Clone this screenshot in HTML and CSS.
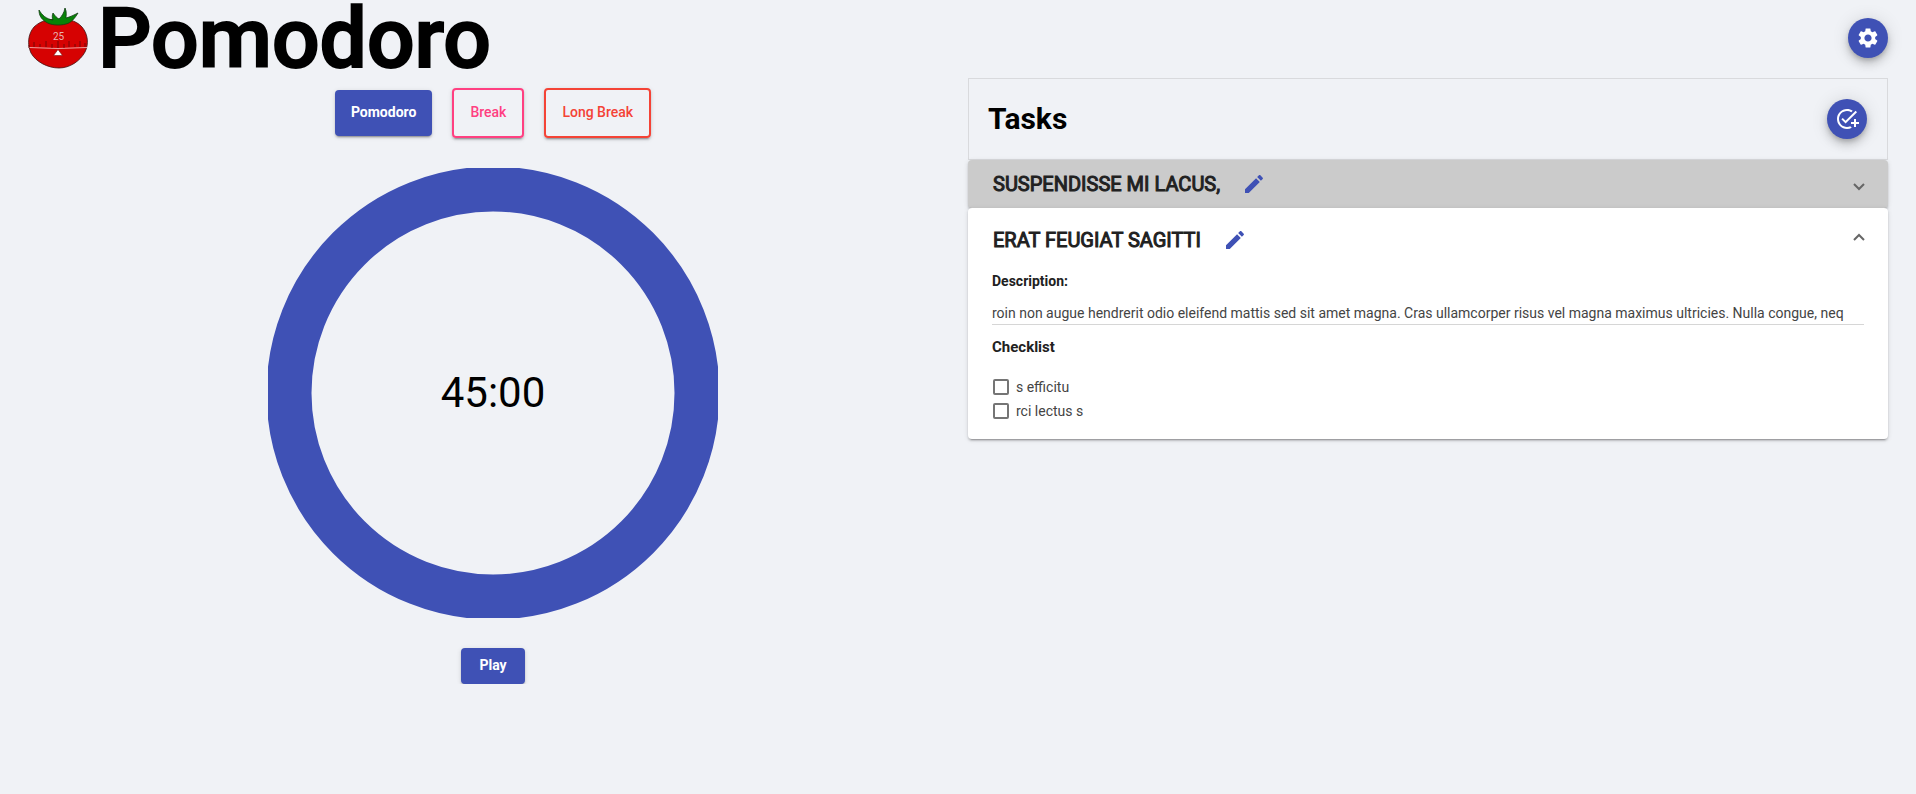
FILE: index.html
```
<!DOCTYPE html>
<html lang="en">
<head>
<meta charset="utf-8">
<title>Pomodoro</title>
<link rel="stylesheet" href="styles.css">
</head>
<body>
<header class="topbar">
  <svg class="logo" viewBox="0 0 60 60" aria-hidden="true">
    <path d="M30 12C37 10 48 12 54 19C60 26 61 36 57 44C52 53 42 60 31 60C20 60 8 54 3 45C-1 36 0 26 6 19C12 13 22 10 30 12Z" fill="#d60202" stroke="#431010" stroke-width=".8"/>
    <path d="M11 2C14 7 18 11 25 12C24 10 24 7 25 5C27 8 29 10 31 11C34 8 36 5 37 0C39 4 38 8 38 10C42 9 46 7 50 5C47 10 43 15 38 16C31 18 22 17 18 14C13 11 11 7 11 2Z" fill="#078307" stroke="#123c12" stroke-width=".8"/>
    <path d="M1 39.500Q30 41.500 59 39.500" fill="none" stroke="#f0a0a0"/>
    <path d="M1 37v3M6 34v5M12 36v3M18 33v6M24 36v4M30 33v7M36 36v4M41 33v6M47 36v3M52 33v6M57 35v4" stroke="#6b0808" stroke-width=".9"/>
    <path d="M30 41.500L34.500 47.500H25.500Z" fill="#fff" stroke="#7b1010" stroke-width=".6"/>
    <text class="logo-text" x="30.500" y="32" text-anchor="middle">25</text>
  </svg>
  <h1 class="title">Pomodoro</h1>
  <button class="fab" type="button" aria-label="Settings">
    <svg class="icon" viewBox="0 0 24 24"><path d="M19.140 12.940c.04-.3.06-.61.06-.94 0-.32-.02-.64-.07-.94l2.030-1.580c.18-.14.23-.41.12-.61l-1.920-3.320c-.12-.22-.37-.29-.59-.22l-2.390.96c-.5-.38-1.030-.7-1.620-.94l-.36-2.540c-.04-.24-.24-.41-.48-.41h-3.840c-.24 0-.43.17-.47.41l-.36 2.540c-.59.24-1.130.57-1.620.94l-2.390-.96c-.22-.08-.47 0-.59.22L2.740 8.870c-.12.21-.08.47.12.61l2.030 1.580c-.05.3-.09.63-.09.94s.02.64.07.94l-2.030 1.580c-.18.14-.23.41-.12.61l1.920 3.320c.12.22.37.29.59.22l2.390-.96c.5.38 1.030.7 1.620.94l.36 2.540c.05.24.24.41.48.41h3.840c.24 0 .44-.17.47-.41l.36-2.540c.59-.24 1.130-.56 1.620-.94l2.390.96c.22.08.47 0 .59-.22l1.920-3.320c.12-.22.07-.47-.12-.61l-2.010-1.580zM12 15.600c-1.980 0-3.600-1.620-3.600-3.600s1.620-3.600 3.600-3.600 3.600 1.620 3.600 3.600-1.620 3.600-3.600 3.600z"/></svg>
  </button>
</header>
<main class="columns">
  <section class="timer">
    <div class="modes">
      <button class="btn btn-mode" type="button">Pomodoro</button>
      <button class="btn btn-outline btn-break" type="button">Break</button>
      <button class="btn btn-outline btn-long" type="button">Long Break</button>
    </div>
    <div class="dial">
      <svg class="ring" viewBox="0 0 450 450" aria-hidden="true"><circle cx="225" cy="225" r="204" fill="none" stroke="#3f51b5" stroke-width="45"/></svg>
      <span class="time">45:00</span>
    </div>
    <button class="btn" type="button">Play</button>
  </section>
  <section class="tasks">
    <div class="tasks-head">
      <h2 class="tasks-title">Tasks</h2>
      <button class="fab" type="button" aria-label="Add task">
        <svg class="icon" viewBox="0 0 24 24"><path d="M22 5.180L10.590 16.600l-4.240-4.240 1.410-1.410 2.830 2.830 10-10L22 5.180zM12 20c-4.410 0-8-3.590-8-8s3.590-8 8-8c1.570 0 3.040.46 4.280 1.250l1.450-1.450C16.100 2.670 14.130 2 12 2 6.480 2 2 6.480 2 12s4.480 10 10 10c1.730 0 3.360-.44 4.780-1.220l-1.500-1.500c-1 .46-2.110.72-3.280.72zm7-5h-3v2h3v3h2v-3h3v-2h-3v-3h-2v3z"/></svg>
      </button>
    </div>
    <article class="panel panel-closed">
      <div class="panel-head">
        <h3 class="panel-title">Suspendisse mi lacus,</h3>
        <button class="plain edit" type="button" aria-label="Edit task"><svg class="icon" viewBox="0 0 24 24"><path d="M3 17.250V21h3.750L17.810 9.940l-3.750-3.750L3 17.250zM20.710 7.040c.39-.39.39-1.020 0-1.410l-2.340-2.340c-.39-.39-1.020-.39-1.410 0l-1.830 1.830 3.750 3.750 1.830-1.830z"/></svg></button>
        <button class="plain toggle" type="button" aria-label="Expand"><svg class="chevron" viewBox="0 0 12 14"><path d="M1 7L6 12L11 7"/></svg></button>
      </div>
    </article>
    <article class="panel panel-open">
      <div class="panel-head">
        <h3 class="panel-title">Erat feugiat sagitti</h3>
        <button class="plain edit" type="button" aria-label="Edit task"><svg class="icon" viewBox="0 0 24 24"><path d="M3 17.250V21h3.750L17.810 9.940l-3.750-3.750L3 17.250zM20.710 7.040c.39-.39.39-1.020 0-1.410l-2.340-2.340c-.39-.39-1.020-.39-1.410 0l-1.830 1.830 3.750 3.750 1.830-1.830z"/></svg></button>
        <button class="plain toggle" type="button" aria-label="Collapse"><svg class="chevron" viewBox="0 0 12 14"><path d="M1 7L6 2L11 7"/></svg></button>
      </div>
      <div class="panel-body">
        <h4 class="label">Description:</h4>
        <p class="description">roin non augue hendrerit odio eleifend mattis sed sit amet magna. Cras ullamcorper risus vel magna maximus ultricies. Nulla congue, neq</p>
        <h4 class="label label-list">Checklist</h4>
        <div class="checklist">
          <label class="check"><input class="box" type="checkbox">s efficitu</label>
          <label class="check"><input class="box" type="checkbox">rci lectus s</label>
        </div>
      </div>
    </article>
  </section>
</main>
</body>
</html>
```
FILE: styles.css
```
* {
  box-sizing: border-box;
}

body {
  margin: 0;
  padding: 0 28px;
  background: #f0f2f6;
  color: #000;
  font: 400 14px/20px Roboto, sans-serif;
}

h1, h2, h3, h4, p {
  margin: 0;
}

button {
  border: 0;
  font: inherit;
  cursor: pointer;
}

.topbar {
  display: flex;
  align-items: center;
  gap: 10px;
  height: 76px;
  margin-bottom: 2px;
}

.logo {
  width: 60px;
  height: 60px;
  overflow: visible;
}

.logo-text {
  fill: #e8b4b4;
  font: 400 10px Roboto, sans-serif;
}

.title {
  flex: 1;
  padding-top: 2px;
  font-size: 84px;
  line-height: 76px;
  font-weight: 500;
  -webkit-text-stroke: 2px currentColor;
}

.fab {
  display: flex;
  align-items: center;
  justify-content: center;
  width: 40px;
  height: 40px;
  padding: 0;
  border-radius: 50%;
  background: #3f51b5;
  color: #fff;
  box-shadow: 0 3px 5px -1px rgba(0, 0, 0, .2), 0 6px 10px rgba(0, 0, 0, .14), 0 1px 18px rgba(0, 0, 0, .12);
}

.icon {
  display: block;
  width: 24px;
  height: 24px;
  fill: currentColor;
}

.columns {
  display: grid;
  grid-template-columns: 1fr 1fr;
}

.timer {
  display: flex;
  flex-direction: column;
  align-items: center;
  gap: 30px;
  padding-top: 10px;
}

.modes {
  display: flex;
  align-items: center;
  gap: 20px;
}

.btn {
  min-width: 64px;
  padding: 0 16px 2px;
  border-radius: 4px;
  background: #3f51b5;
  color: #fff;
  font-weight: 700;
  line-height: 34px;
  box-shadow: 0 3px 1px -2px rgba(0, 0, 0, .2), 0 2px 2px rgba(0, 0, 0, .14), 0 1px 5px rgba(0, 0, 0, .12);
}

.btn-mode {
  padding: 5px 16px 7px;
}

.btn-outline {
  padding: 5px 16px 7px;
  border: 2px solid currentColor;
  background: transparent;
  font-weight: 500;
}

.btn-break {
  color: #ff4081;
}

.btn-long {
  color: #f44336;
}

.dial {
  display: grid;
  place-items: center;
}

.ring,
.time {
  grid-area: 1 / 1;
}

.ring {
  display: block;
  width: 450px;
  height: 450px;
}

.time {
  font-size: 42px;
  line-height: 48px;
}

.tasks {
  margin-left: 10px;
}

.tasks-head {
  display: flex;
  align-items: center;
  justify-content: space-between;
  height: 82px;
  padding: 0 20px 0 19px;
  border: 1px solid #d9dadd;
}

.tasks-title {
  font-size: 30px;
  line-height: 36px;
  font-weight: 700;
}

.panel {
  border-radius: 4px;
  background: #fff;
  color: #212121;
  box-shadow: 0 3px 1px -2px rgba(0, 0, 0, .2), 0 2px 2px rgba(0, 0, 0, .14), 0 1px 5px rgba(0, 0, 0, .12);
}

.panel-closed {
  background: #cbcbcb;
}

.panel-head {
  display: flex;
  align-items: center;
  height: 48px;
  padding: 0 23px 0 25px;
}

.panel-open .panel-head {
  height: 64px;
}

.panel-title {
  font-size: 20px;
  line-height: 24px;
  font-weight: 400;
  text-transform: uppercase;
  -webkit-text-stroke: 1px currentColor;
}

.plain {
  padding: 0;
  background: none;
}

.edit {
  margin-left: 22px;
  color: #3f51b5;
}

.toggle {
  margin-left: auto;
}

.chevron {
  display: block;
  width: 12px;
  height: 14px;
  fill: none;
  stroke: #666;
  stroke-width: 2;
}

.panel-body {
  padding: 0 24px 18px;
}

.label {
  line-height: 18px;
  font-weight: 700;
}

.label-list {
  font-size: 15px;
  line-height: 20px;
}

.description {
  margin: 13px 0 12px;
  padding-bottom: 1px;
  border-bottom: 1px solid #d6d6d6;
  color: #444;
}

.checklist {
  display: grid;
  gap: 4px;
  margin-top: 20px;
  padding-left: 1px;
  color: #444;
}

.check {
  display: flex;
  align-items: center;
  gap: 7px;
}

.box {
  appearance: none;
  width: 16px;
  height: 16px;
  margin: 0;
  border: 2px solid #757575;
  border-radius: 2px;
}
```
